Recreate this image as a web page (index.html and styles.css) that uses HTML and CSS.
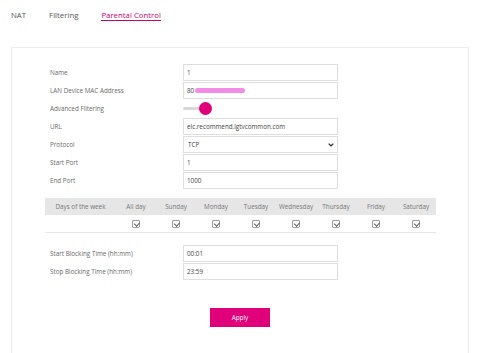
FILE: index.html
```html
<!DOCTYPE html>
<html lang="en">
  <head>
    <meta charset="UTF-8" />
    <title>Parental Control</title>
    <link rel="stylesheet" href="styles.css">
  </head>
  <body>
    <nav class="tabs">
      <a class="tab">NAT</a>
      <a class="tab">Filtering</a>
      <a class="tab active">Parental Control</a>
    </nav>

    <div class="card">
      <div class="form-grid">
        <label>Name</label>
        <input class="field" type="text" value="1" />
        <label>LAN Device MAC Address</label>
        <div class="field mac">80<span class="smudge"></span></div>
        <label>Advanced Filtering</label>
        <div class="toggle"><span class="track"></span><span class="thumb"></span></div>
        <label>URL</label>
        <input class="field" type="text" value="elc.recommend.lgtvcommon.com" />
        <label>Protocol</label>
        <div class="field select">TCP
          <svg width="6" height="4" viewBox="0 0 6 4"><path d="M0.7 0.7 L3 3 L5.3 0.7" fill="none" stroke="#222" stroke-width="1.2"/></svg>
        </div>
        <label>Start Port</label>
        <input class="field" type="text" value="1" />
        <label>End Port</label>
        <input class="field" type="text" value="1000" />
      </div>

      <table class="days">
        <thead>
          <tr>
            <th class="first">Days of the week</th>
            <th>All day</th>
            <th>Sunday</th>
            <th>Monday</th>
            <th>Tuesday</th>
            <th>Wednesday</th>
            <th>Thursday</th>
            <th>Friday</th>
            <th>Saturday</th>
          </tr>
        </thead>
        <tbody>
          <tr>
            <td></td>
            <td><span class="check"></span></td>
            <td><span class="check"></span></td>
            <td><span class="check"></span></td>
            <td><span class="check"></span></td>
            <td><span class="check"></span></td>
            <td><span class="check"></span></td>
            <td><span class="check"></span></td>
            <td><span class="check"></span></td>
          </tr>
        </tbody>
      </table>

      <div class="form-grid times">
        <label>Start Blocking Time (hh:mm)</label>
        <input class="field" type="text" value="00:01" />
        <label>Stop Blocking Time (hh:mm)</label>
        <input class="field" type="text" value="23:59" />
      </div>

      <div class="actions">
        <button class="apply">Apply</button>
      </div>
    </div>
  </body>
</html>
```

FILE: styles.css
```css
* {
  margin: 0;
  padding: 0;
  box-sizing: border-box;
}

body {
  font-family: "Open Sans", "Noto Sans", sans-serif;
  background-color: #fff;
  color: #666;
}

.tabs {
  display: flex;
  gap: 23px;
  padding: 10px 11px 0;
  height: 47px;
}

.tab {
  font-size: 7.8px;
  color: #555;
  height: 11px;
  line-height: 11px;
}

.tab.active {
  color: #c8006e;
  border-bottom: 1px solid #c8006e;
}

.card {
  margin: 0 11px;
  height: 320px;
  border: 1px solid #ececec;
  padding: 16px 0 0 33px;
}

.form-grid {
  display: grid;
  grid-template-columns: 133px 155px;
  grid-auto-rows: 17px;
  row-gap: 1px;
  padding-left: 5px;
}

.form-grid label {
  font-size: 6.3px;
  line-height: 17px;
  color: #6a6a6a;
}

.field {
  font-family: inherit;
  font-size: 6.3px;
  color: #444;
  border: 1px solid #dedede;
  background: #fff;
  height: 17px;
  padding: 0 3px;
  line-height: 15px;
  outline: none;
}

.mac {
  display: flex;
  align-items: center;
}

.smudge {
  display: inline-block;
  width: 50px;
  height: 5px;
  border-radius: 3px;
  background-color: #f38ce6;
  filter: blur(0.6px);
  margin-left: 1px;
}

.toggle {
  position: relative;
  height: 17px;
}

.track {
  position: absolute;
  left: 0;
  top: 7px;
  width: 18px;
  height: 3px;
  border-radius: 2px;
  background-color: #d8d8d8;
}

.thumb {
  position: absolute;
  left: 16px;
  top: 2px;
  width: 13px;
  height: 13px;
  border-radius: 50%;
  background-color: #e0007a;
}

.select {
  display: flex;
  justify-content: space-between;
  align-items: center;
  padding: 0 3px 0 4px;
}

.days {
  margin-top: 9px;
  width: 391px;
  border-collapse: collapse;
  font-size: 6.3px;
  color: #777;
}

.days th {
  font-weight: 400;
  background-color: #e6e6e6;
  height: 17px;
  width: 40px;
  text-align: center;
}

.days th.first {
  width: 71px;
}

.days td {
  height: 17px;
  text-align: center;
  border-bottom: 1px solid #e6e6e6;
}

.check {
  display: inline-block;
  width: 8px;
  height: 8px;
  border: 1px solid #a0a0a0;
  border-radius: 1px;
  position: relative;
  vertical-align: middle;
}

.check::after {
  content: "";
  position: absolute;
  left: 1.5px;
  top: 0.5px;
  width: 2.5px;
  height: 4px;
  border: solid #555;
  border-width: 0 1px 1px 0;
  transform: rotate(45deg);
}

.times {
  margin-top: 12px;
}

.actions {
  margin-top: 23px;
  padding-left: 165px;
}

.apply {
  width: 60px;
  height: 19px;
  border: none;
  background-color: #e0007a;
  color: #fff;
  font-family: inherit;
  font-size: 6.3px;
}
```
